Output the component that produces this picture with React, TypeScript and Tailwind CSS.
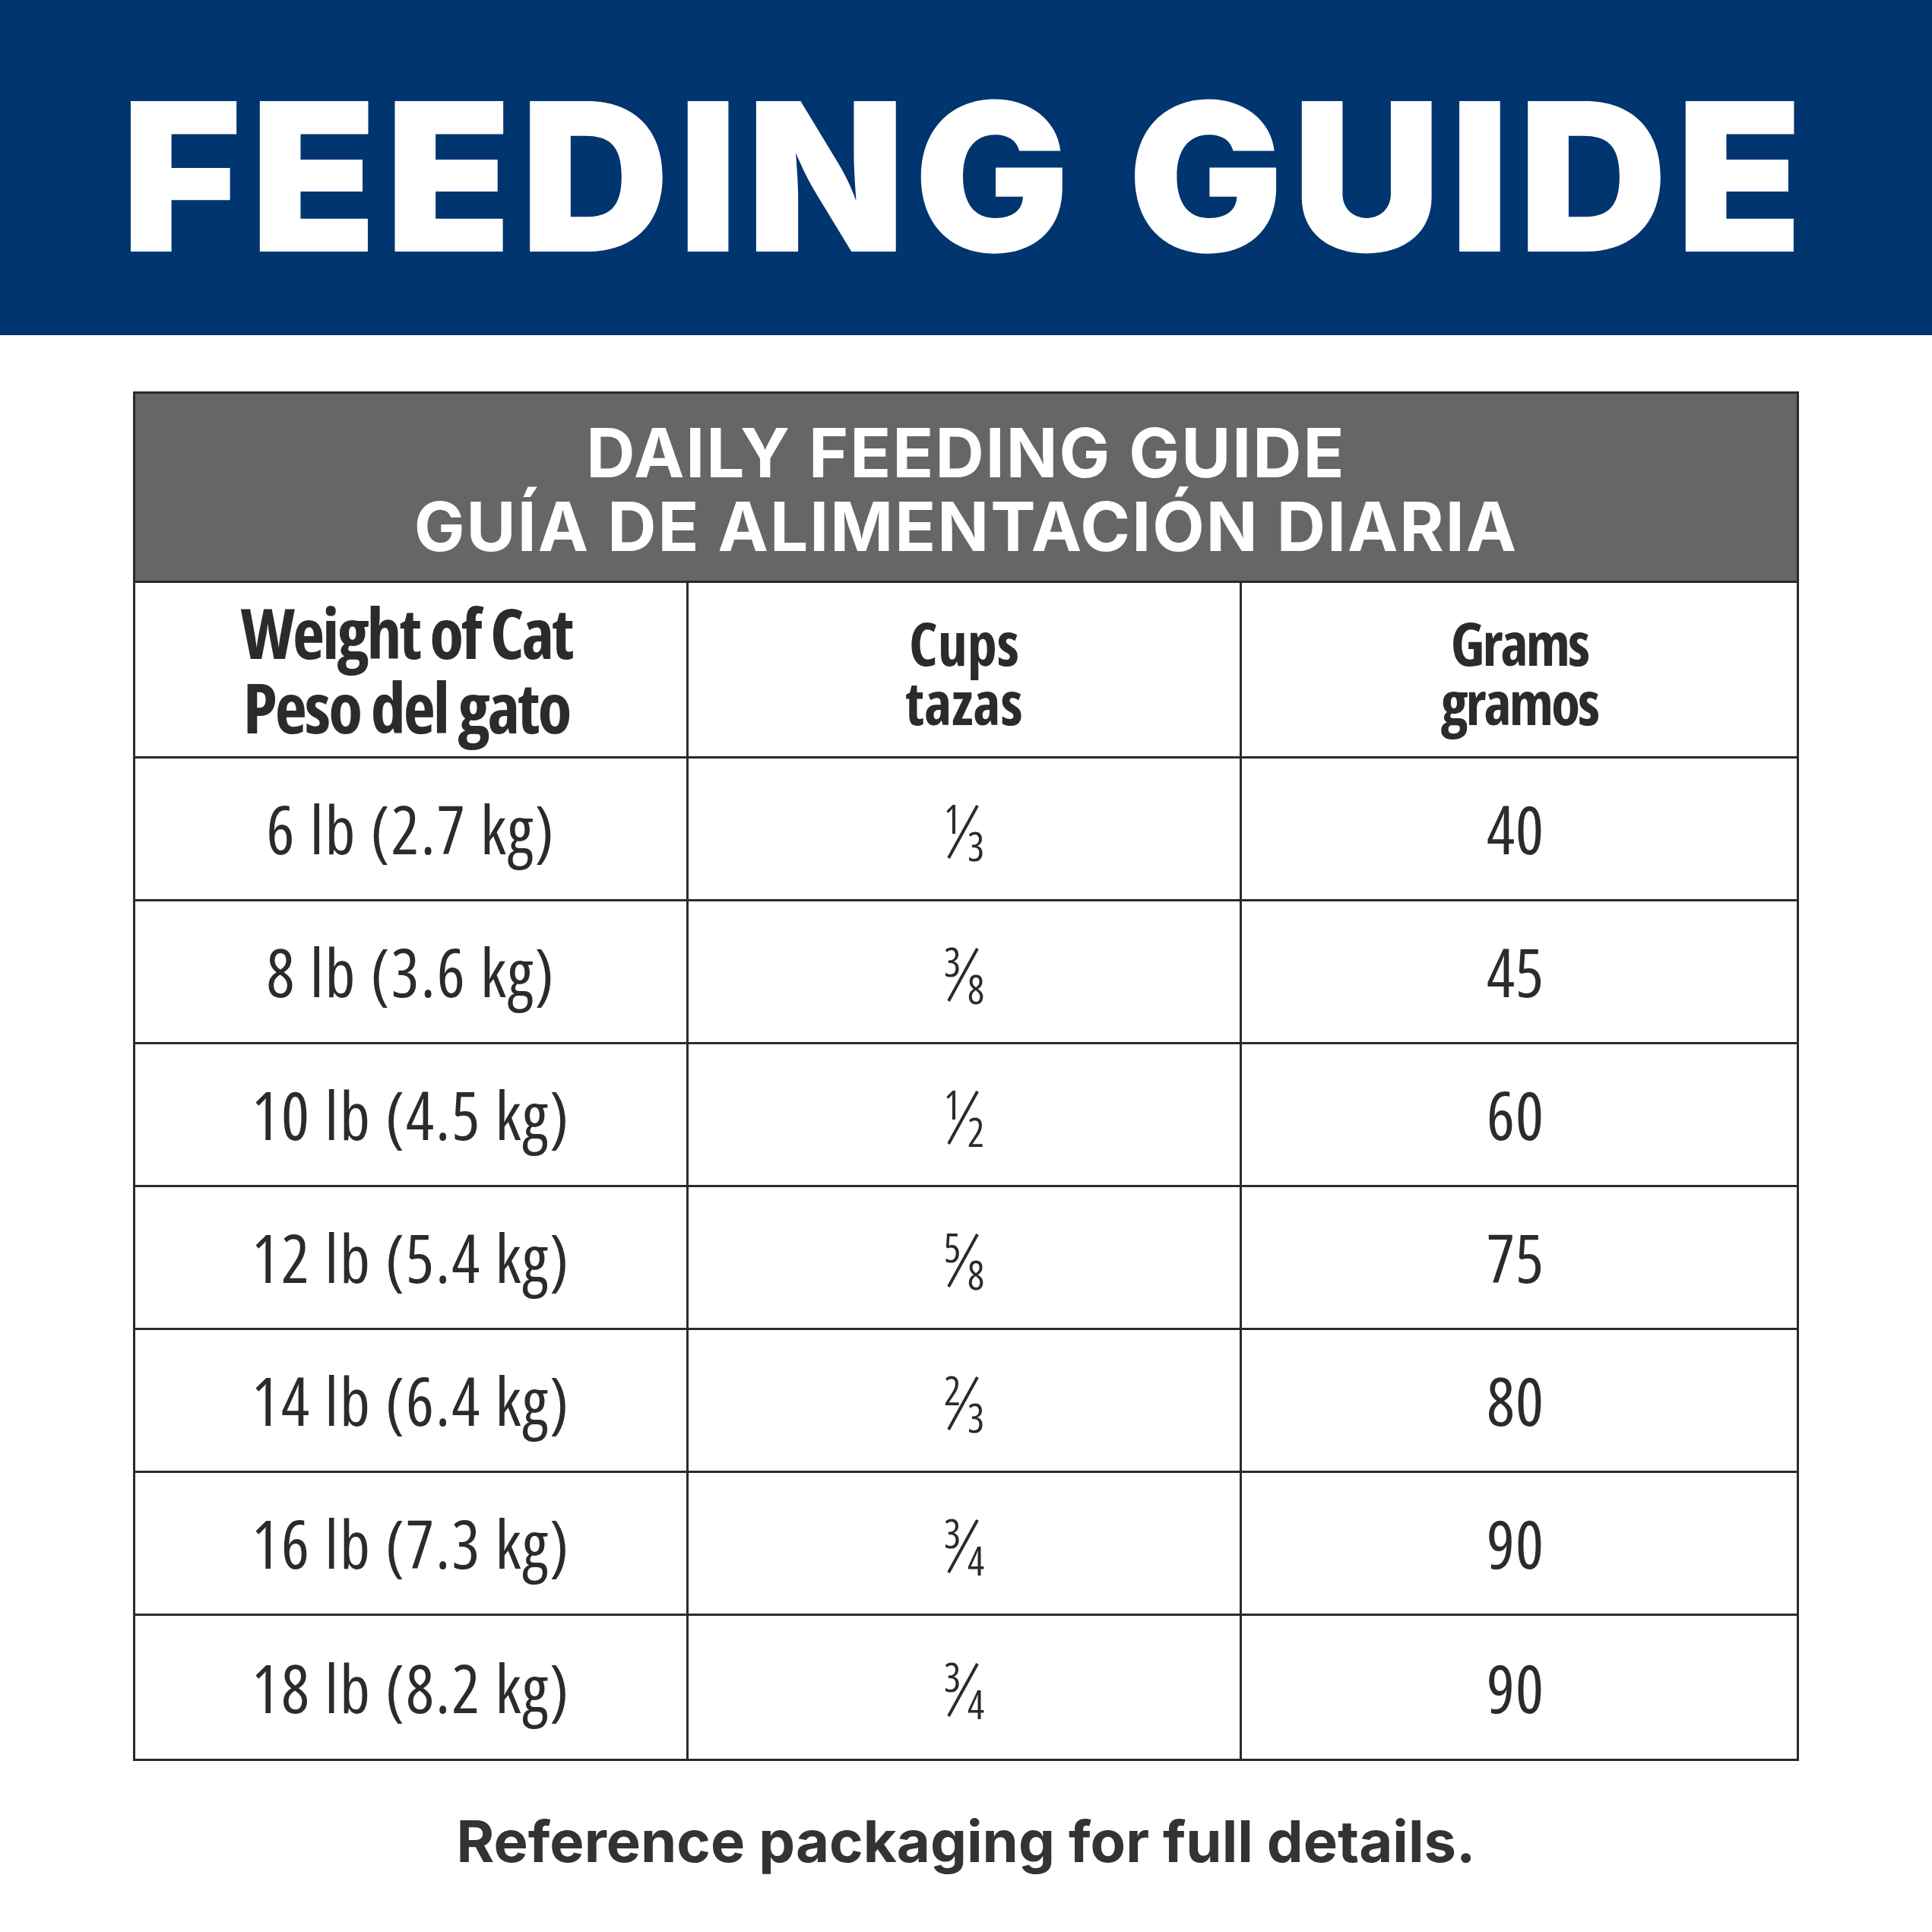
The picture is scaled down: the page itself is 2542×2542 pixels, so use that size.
import React from 'react';

type Row = { weight: string; cups: [string, string]; grams: string };

const rows: Row[] = [
    { weight: '6 lb (2.7 kg)', cups: ['1', '3'], grams: '40' },
    { weight: '8 lb (3.6 kg)', cups: ['3', '8'], grams: '45' },
    { weight: '10 lb (4.5 kg)', cups: ['1', '2'], grams: '60' },
    { weight: '12 lb (5.4 kg)', cups: ['5', '8'], grams: '75' },
    { weight: '14 lb (6.4 kg)', cups: ['2', '3'], grams: '80' },
    { weight: '16 lb (7.3 kg)', cups: ['3', '4'], grams: '90' },
    { weight: '18 lb (8.2 kg)', cups: ['3', '4'], grams: '90' },
];

const openSans = "font-['Open_Sans','Noto_Sans',sans-serif]";

// stacked fraction: numerator up left, long thin slash, denominator down right
const Fraction: React.FC<{ num: string; den: string }> = ({ num, den }) => (
    <span className={`inline-flex h-[72px] text-[#2b2b2b] ${openSans} font-normal text-[52px] leading-[36px]`}>
        <span className="self-start">{num}</span>
        <svg className="-ml-[18px] -mr-[15px] shrink-0" width="42" height="72" viewBox="0 0 42 72">
            <line x1="40" y1="1" x2="2" y2="70" stroke="#2b2b2b" strokeWidth="4" />
        </svg>
        <span className="self-end">{den}</span>
    </span>
);

const App: React.FC = () => {
    return (
        <div className="w-[2542px] h-[2542px] bg-white flex flex-col">
            <header className="h-[441px] bg-[#00356f] flex items-center justify-center pt-[22px]">
                <h1 className="font-['Inter',sans-serif] font-black text-[272px] leading-none text-white tracking-[11px]">
                    FEEDING GUIDE
                </h1>
            </header>

            <div className="mt-[74px] mx-[175px] border-[3px] border-[#2b2b2b]">
                <div className="h-[249px] bg-[#666666] flex flex-col items-center justify-center pt-[6px] border-b-[3px] border-[#2b2b2b] font-['Inter',sans-serif] font-bold text-[89px] leading-[97px] tracking-[2px] text-white">
                    <div>DAILY FEEDING GUIDE</div>
                    <div>GUÍA DE ALIMENTACIÓN DIARIA</div>
                </div>

                <div className={`grid grid-cols-[725px_728px_1fr] h-[231px] border-b-[3px] border-[#2b2b2b] text-[#2b2b2b] ${openSans} font-stretch-condensed font-bold`}>
                    <div className="flex flex-col items-center justify-center pr-[12px] text-[92px] leading-[98px] tracking-[-3px]">
                        <div>Weight of Cat</div>
                        <div>Peso del gato</div>
                    </div>
                    <div className="border-l-[3px] border-[#2b2b2b] flex flex-col items-center justify-center pt-[8px] text-[78px] leading-[78px]">
                        <div>Cups</div>
                        <div>tazas</div>
                    </div>
                    <div className="border-l-[3px] border-[#2b2b2b] flex flex-col items-center justify-center pt-[8px] text-[78px] leading-[78px] tracking-[-3px]">
                        <div>Grams</div>
                        <div>gramos</div>
                    </div>
                </div>

                {rows.map((row, i) => (
                    <div
                        key={row.weight}
                        className={`grid grid-cols-[725px_728px_1fr] h-[188px] text-[#2b2b2b] ${openSans} font-stretch-condensed font-medium text-[87px] ${i < rows.length - 1 ? 'border-b-[3px] border-[#2b2b2b]' : ''}`}
                    >
                        <div className="flex items-center justify-center tracking-[2px]">{row.weight}</div>
                        <div className="border-l-[3px] border-[#2b2b2b] flex items-center justify-center pt-[8px]">
                            <Fraction num={row.cups[0]} den={row.cups[1]} />
                        </div>
                        <div className="border-l-[3px] border-[#2b2b2b] flex items-center justify-center pr-[10px] tracking-[1px]">{row.grams}</div>
                    </div>
                ))}
            </div>

            <div className="flex-1 flex items-center justify-center pb-[16px]">
                <p className="font-['Inter',sans-serif] font-bold text-[76px] text-[#333333]">
                    Reference packaging for full details.
                </p>
            </div>
        </div>
    );
};

export default App;
